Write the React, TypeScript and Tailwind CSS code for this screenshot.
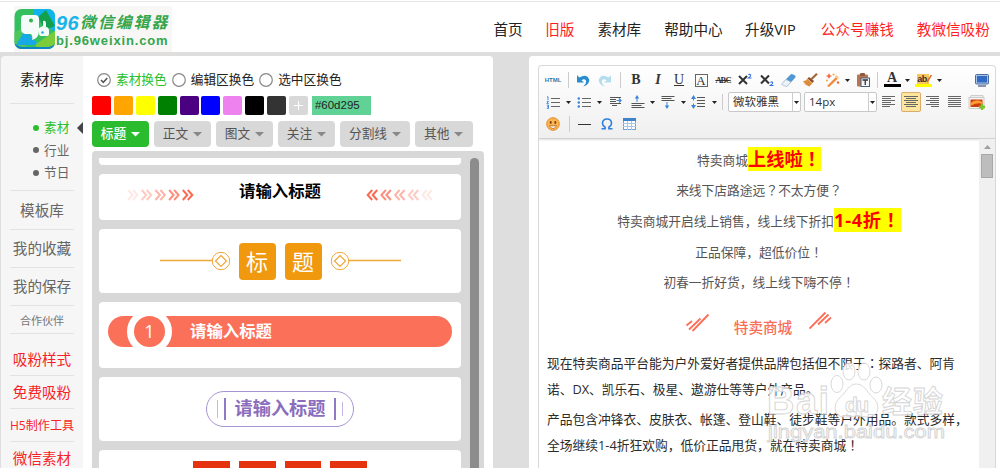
import React from 'react';
import clsx from 'clsx';

const NAV = [
  { label: '首页', pos: 'ml-[493.5px]' },
  { label: '旧版', pos: 'ml-[22.5px]', hot: true },
  { label: '素材库', pos: 'ml-[23px]' },
  { label: '帮助中心', pos: 'ml-[23px]' },
  { label: '升级VIP', pos: 'ml-[22.5px]' },
  { label: '公众号赚钱', pos: 'ml-[25px]', hot: true },
  { label: '教微信吸粉', pos: 'ml-[23px]', hot: true },
];

const SWATCHES = [
  'bg-[#ff0000]',
  'bg-[#ffa500]',
  'bg-[#ffff00]',
  'bg-[#008000]',
  'bg-[#4b0082]',
  'bg-[#0000ff]',
  'bg-[#ee82ee]',
  'bg-black',
  'bg-[#333333]',
];

const TABS = [
  { label: '标题', size: 'w-[57px]', active: true },
  { label: '正文', size: 'w-[57px]' },
  { label: '图文', size: 'w-[57px]' },
  { label: '关注', size: 'w-[57px]' },
  { label: '分割线', size: 'w-[70px]' },
  { label: '其他', size: 'w-[57.5px]' },
];

// Centres the full-width marks ！？： in their cell, the SC face sets them to the left
const Zh: React.FC<{ children: string }> = ({ children }) => (
  <>
    {children.split(/([！？：])/).map((part, i) =>
      /^[！？：]$/.test(part) ? (
        <span key={i} className="font-['Noto_Sans_CJK_JP',sans-serif]" lang="ja">{part}</span>
      ) : (
        part
      )
    )}
  </>
);

const Logo = () => (
  <div className="absolute left-[14px] top-[6px] flex h-[46px] w-[158px] bg-[#f8f7f5]">
    <svg width="42" height="46" viewBox="0 0 42 46" className="shrink-0">
      <defs>
        <clipPath id="logo-clip">
          <rect x="0.5" y="3" width="40.5" height="40" rx="7" />
        </clipPath>
      </defs>
      <g clipPath="url(#logo-clip)">
        <rect width="42" height="46" fill="#35c060" />
        <path d="M20 3h22v24L20 9z" fill="#0fb4ea" />
        <path d="M24 11l8-7 9 16-10 4z" fill="#12a04c" />
        <path d="M0 27l7-4 5 20H0z" fill="#4fc75a" />
        <path d="M2 39l9-15 14 15z" fill="#16a9e6" />
        <path d="M22 38l19-13v18H22z" fill="#7bcc3a" />
        <path d="M0 37q4 4 10 4h22q6 0 10-4v9H0z" fill="#0d84c6" />
      </g>
      <path d="M10 9h11q4 0 4 4v12q0 7-7 9 1-4-1-6h-6q-4-1-4-5V13q0-4 3-4z" fill="#f4fbf8" />
      <path d="M25 22l4-2v-5q3-1 3 3v3q3 0 3 4v3q0 2-3 2h-5q-2 0-2-3z" fill="#f4fbf8" />
      <circle cx="17" cy="14.500" r="2" fill="#2db34a" />
      <circle cx="28.500" cy="26.500" r="1.300" fill="#18aee4" />
    </svg>
    <div className="flex flex-col whitespace-nowrap">
      <div className="mt-[6px] flex h-[21px] items-center italic leading-none text-[#35a64b]">
        <span className="w-[24px] font-['Liberation_Sans',sans-serif] text-[20px] font-bold tracking-[0.5px] text-[#19b4e8]">96</span>
        <span className="text-[15.800px] font-bold tracking-[2.100px]">微信编辑器</span>
      </div>
      <div className="font-['Liberation_Sans',sans-serif] text-[13px] font-bold leading-[15px] tracking-[0.850px] text-[#35a64b]">
        bj.96weixin.com
      </div>
    </div>
  </div>
);

const SideItem: React.FC<{ className?: string; children: React.ReactNode }> = ({ className, children }) => (
  <div
    className={clsx(
      'flex shrink-0 items-center justify-center whitespace-nowrap border-b border-[#e2e2e2]',
      className
    )}
  >
    {children}
  </div>
);

const Sidebar = () => (
  <aside className="flex w-[82px] shrink-0 flex-col rounded-tl bg-[#f6f6f6] px-[9px] text-[14.6px] text-[#666]">
    <SideItem className="h-12 pt-px text-[#222]">素材库</SideItem>
    <div className="-mr-[9px] h-[87px] shrink-0 pt-[12.500px] text-[12.7px]">
      {['素材', '行业', '节日'].map((name, i) => (
        <div key={name} className={clsx('flex h-[22.600px] items-center pl-[23px]', i === 0 && 'text-[#2bbf2e]')}>
          <span className={clsx('mr-[5px] size-1.5 rounded-full', i === 0 ? 'bg-[#2bbf2e]' : 'bg-[#666]')} />
          {name}
          {i === 0 && (
            <svg width="6" height="12" className="ml-auto">
              <path d="M6 0v12L0 6z" fill="#45434a" />
            </svg>
          )}
        </div>
      ))}
    </div>
    <SideItem className="-mt-px h-10 border-t pt-[2px]">模板库</SideItem>
    <SideItem className="h-[38px] pt-px">我的收藏</SideItem>
    <SideItem className="h-[38px] pt-px">我的保存</SideItem>
    <SideItem className="h-7 pt-[3px] text-[11px] text-[#777]">合作伙伴</SideItem>
    <SideItem className="h-[42px] pt-[11px] text-[#f81f28]">吸粉样式</SideItem>
    <SideItem className="h-[33px] pt-[2px] text-[#f81f28]">免费吸粉</SideItem>
    <SideItem className="h-[33px] pt-[2px] text-[12.1px] text-[#f81f28]">H5制作工具</SideItem>
    <SideItem className="h-[33px] pt-[2px] text-[#f81f28]">微信素材</SideItem>
  </aside>
);

const Radio: React.FC<{ label: string; checked?: boolean }> = ({ label, checked }) => (
  <label className={clsx('flex items-center gap-[5px] whitespace-nowrap', checked ? 'text-[#2bbf2e]' : 'text-[#222]')}>
    <svg width="14" height="14" fill="none" stroke="#888" strokeWidth="1.200">
      <circle cx="7" cy="7" r="6.300" />
      {checked && <path d="M4 7l2.300 2.300L10.300 5" stroke="#555" strokeWidth="1.500" />}
    </svg>
    {label}
  </label>
);

const Chevrons: React.FC<{ flip?: boolean }> = ({ flip }) => (
  <svg width="68" height="12" fill="none" stroke="#fb6b54" strokeWidth="2" className={flip ? '-scale-x-100' : ''}>
    {[0.15, 0.35, 0.5, 0.75, 1].map((o, i) => (
      <g key={i} opacity={o} transform={`translate(${i * 13.7} 0)`}>
        <path d="M1 1l4.500 5L1 11" />
        <path d="M6 1l4.500 5L6 11" />
      </g>
    ))}
  </svg>
);

const Coin: React.FC<{ flip?: boolean }> = ({ flip }) => (
  <svg width="70" height="20" fill="none" stroke="#efa63c" className={flip ? '-scale-x-100' : ''}>
    <path d="M0 9.500h52" strokeWidth="1.500" />
    <circle cx="61" cy="10" r="8.700" />
    <path d="M61 4.500l5.500 5.500-5.500 5.500-5.500-5.500z" strokeWidth="1.200" />
  </svg>
);

const Card: React.FC<{ className: string; children?: React.ReactNode }> = ({ className, children }) => (
  <div className={clsx('flex shrink-0 justify-center bg-white', className)}>{children}</div>
);

const Materials = () => (
  <section className="flex w-[410px] shrink-0 flex-col rounded-tr bg-white pl-[9px] text-[12.7px]">
    <div className="mt-[15px] flex h-[18px] shrink-0 items-center gap-[5px] pl-[5px]">
      <Radio label="素材换色" checked />
      <Radio label="编辑区换色" />
      <Radio label="选中区换色" />
    </div>
    <div className="mt-[6.500px] flex h-[19.500px] shrink-0 gap-[2.900px]">
      {SWATCHES.map((c) => (
        <span key={c} className={clsx('w-[19px] rounded-[2px]', c)} />
      ))}
      <span className="flex w-[19px] items-center justify-center rounded-[2px] bg-[#d8d8d8] text-white">
        <svg width="9" height="9" stroke="currentColor">
          <path d="M0 4.500h9M4.500 0v9" />
        </svg>
      </span>
      <span className="ml-px flex w-[59px] items-center bg-[#60d295] pl-[3px] font-['Liberation_Sans',sans-serif] text-[11.500px] text-[#222]">
        #60d295
      </span>
    </div>
    <div className="mt-[6px] flex h-[26px] shrink-0 gap-[5px]">
      {TABS.map((t) => (
        <button
          key={t.label}
          className={clsx(
            'flex shrink-0 items-center justify-center gap-[5px] whitespace-nowrap rounded',
            t.size,
            t.active ? 'bg-[#2bbb2e] font-medium text-white' : 'bg-[#d8d8d8] text-[#555]'
          )}
        >
          {t.label}
          <svg width="9" height="5" className={t.active ? 'text-white' : 'text-[#888]'}>
            <path d="M0 0h9L4.500 4.500z" fill="currentColor" />
          </svg>
        </button>
      ))}
    </div>
    <div className="mt-1 flex min-h-0 w-[392px] flex-1 justify-between overflow-hidden rounded-t bg-[#d8d8d8] pl-[7px] pr-[5px] pt-[7px]">
      <div className="flex w-[362px] flex-col gap-[9px]">
        <Card className="h-[7px] rounded-b" />
        <Card className="h-[46px] justify-between! rounded px-7 pt-[15px]">
          <Chevrons />
          <span className="-mt-[10px] text-[16.400px] font-bold leading-6 text-black">请输入标题</span>
          <Chevrons flip />
        </Card>
        <Card className="h-[64px] items-center gap-[9px] rounded">
          <Coin />
          {['标', '题'].map((ch) => (
            <span key={ch} className="flex size-[37px] items-center justify-center rounded bg-[#f0990f] text-[22px] text-white">
              {ch}
            </span>
          ))}
          <Coin flip />
        </Card>
        <Card className="h-[66px] rounded px-[9px] pt-[14px]">
          <div className="flex h-[31px] flex-1 items-center overflow-hidden rounded-full bg-[#fb7059] pl-[19px] text-white">
            <span className="flex size-[45px] shrink-0 items-center justify-center rounded-full border-[7px] border-white text-[18px]">
              1
            </span>
            <span className="ml-[18px] text-[16.400px] font-bold">请输入标题</span>
          </div>
        </Card>
        <Card className="h-[64px] rounded pt-[13.500px]">
          <div className="flex h-[36.500px] w-[148px] items-center justify-center rounded-full border border-[#a894d2] text-[#8a6dbd]">
            <span className="mr-[5.500px] h-[18px] w-[1.500px] bg-[#c4b6df]" />
            <span className="h-[22px] w-[2px] bg-[#8f78c4]" />
            <span className="mx-[9px] whitespace-nowrap text-[18.200px] font-bold">请输入标题</span>
            <span className="h-[22px] w-[2px] bg-[#8f78c4]" />
            <span className="ml-[5.500px] h-[14px] w-[1.500px] bg-[#c4b6df]" />
          </div>
        </Card>
        <Card className="h-[40px] gap-[9px] rounded-t pt-[10.500px]">
          {[0, 1, 2, 3].map((n) => (
            <span key={n} className="h-9 w-[36.600px] bg-[#e5330f]" />
          ))}
        </Card>
      </div>
      <div className="w-[9px] rounded-t-full bg-[#8c8c8c]" />
    </div>
  </section>
);

const Cell: React.FC<{ className?: string; children?: React.ReactNode }> = ({ className, children }) => (
  <span className={clsx('flex h-[20px] shrink-0 items-center justify-center leading-none', className)}>{children}</span>
);

const Sep: React.FC<{ className: string }> = ({ className }) => (
  <Cell className={className}>
    <span className="h-4 w-px bg-[#ccc]" />
  </Cell>
);

const Caret: React.FC<{ className: string }> = ({ className }) => (
  <Cell className={className}>
    <svg width="5" height="3">
      <path d="M0 0h5L2.500 3z" fill="#222" />
    </svg>
  </Cell>
);

const Lines: React.FC<{ rows: string }> = ({ rows }) => (
  <svg width="14" height="12" stroke="#666" strokeWidth="1">
    <path d={rows} />
  </svg>
);

const Toolbar = () => (
  <div className="h-[73px] shrink-0 rounded-t border-b border-[#d2d2d2] bg-gradient-to-b from-white to-[#efefef] pl-[3px] pt-[3px] text-[#333] shadow-[0_1px_2px_#ddd]">
    <div className="flex h-[22px] items-center font-['Liberation_Serif',serif]">
      <Cell className="w-[22px] font-['Liberation_Sans',sans-serif] text-[6px] font-bold text-[#2c7bab]">HTML</Cell>
      <Sep className="w-2" />
      <Cell className="w-[22px]">
        <svg width="14" height="13" fill="none">
          <path d="M1 1v7.500h7L5.500 6.200q3-1.900 4.400.2 1.200 2.500-2.700 6.100 6.500-2 6-7Q11-.8 3.300 3.400z" fill="#288dcc" />
        </svg>
      </Cell>
      <Cell className="w-[22px]">
        <svg width="14" height="13" className="-scale-x-100">
          <path d="M1 1v7.500h7L5.500 6.200q3-1.900 4.400.2 1.200 2.500-2.700 6.100 6.500-2 6-7Q11-.8 3.300 3.400z" fill="#b4ddef" />
        </svg>
      </Cell>
      <Sep className="w-2" />
      <Cell className="w-6 text-[14px] font-bold">B</Cell>
      <Cell className="w-5 text-[14px] font-bold italic">I</Cell>
      <Cell className="w-[22px] text-[14px] font-medium underline">U</Cell>
      <Cell className="w-[22px]">
        <span className="flex size-[13px] items-center justify-center border border-[#666] text-[13px]">A</span>
      </Cell>
      <Cell className="w-[22px] text-[8.500px] font-bold tracking-[-0.900px] line-through">ABC</Cell>
      <Cell className="w-[22px]">
        <svg width="15" height="14" fill="none" stroke="#333" strokeWidth="2">
          <path d="M1 3l8 8M9 3l-8 8" />
          <path d="M10.500 2q1-1.500 2.200 0 .3 1-2.200 3h3" stroke="#2d6fe0" strokeWidth="1.200" />
        </svg>
      </Cell>
      <Cell className="w-[23px]">
        <svg width="15" height="14" fill="none" stroke="#333" strokeWidth="2">
          <path d="M1 2.500l8 8M9 2.500l-8 8" />
          <path d="M10.500 9.500q1-1.500 2.200 0 .3 1-2.200 3h3" stroke="#2d6fe0" strokeWidth="1.200" />
        </svg>
      </Cell>
      <Cell className="w-5">
        <svg width="16" height="14">
          <path d="M1 10.500L9.500 1.500q1-1 2.200-.2L14 2.500q1.300 1 .2 2.300L6.500 13q-1 .8-2 .2l-3-1.200q-1.200-.7-.5-1.500z" fill="#4f98d4" />
          <path d="M1 10.500l4-4 5 2.500-3.500 4q-1 .8-2 .2l-3-1.200q-1.200-.7-.5-1.500z" fill="#eef3f8" stroke="#9fb4c8" strokeWidth=".6" />
        </svg>
      </Cell>
      <Cell className="w-[22px]">
        <svg width="16" height="14">
          <path d="M15 .8L9.500 6" stroke="#a2653a" strokeWidth="2.200" />
          <path d="M7 4l5 4-1.500 2L5.500 5.500z" fill="#8a4b32" />
          <path d="M5.500 5.500l5 4.500-3 3.500Q3 12.500 1 8q3 0 4.500-2.500z" fill="#e79a45" />
          <path d="M3 8.500l4.500 4M5 7.500l4 4" stroke="#b9652a" strokeWidth=".7" />
        </svg>
      </Cell>
      <Cell className="w-[22px]">
        <svg width="15" height="14">
          <path d="M2 13L11 4l1.800 1.800L4 14z" fill="#f08a3a" />
          <path d="M10 3.500l2.500 2.500 1.500-1.500L11.500 2z" fill="#ffc58b" />
          <path d="M4 0l1 2.200L7.200 3 5 4l-1 2-1-2-2.200-1L3 2.200z" fill="#ef6a3c" />
          <circle cx="2" cy="7.500" r="1" fill="#f5a33c" />
          <circle cx="8.500" cy="1.500" r="1" fill="#f5a33c" />
          <circle cx="13" cy="9.500" r="1.200" fill="#ef6a3c" />
        </svg>
      </Cell>
      <Caret className="w-2" />
      <Cell className="w-6">
        <svg width="14" height="14">
          <rect x="1" y="1.500" width="11" height="12" rx="1" fill="#b9764e" />
          <rect x="4" y="0" width="5" height="3" rx="1" fill="#8a5a44" />
          <rect x="5" y="5" width="8.500" height="8.500" fill="#f3f7fc" stroke="#4a5f80" />
          <path d="M6.500 7h5.500M9.250 7v5" stroke="#333" strokeWidth="1.300" />
        </svg>
      </Cell>
      <Sep className="w-[5px]" />
      <Cell className="w-6">
        <span className="flex h-[14px] w-[17px] items-end justify-center border-b-[3px] border-black text-[14px] font-bold leading-[12px]">A</span>
      </Cell>
      <Caret className="w-[7px]" />
      <Cell className="w-6">
        <span className="relative flex h-[14px] w-[17px] items-end justify-center border-b-[3px] border-[#ffff00] font-['Liberation_Sans',sans-serif] text-[9px] font-bold tracking-[-0.500px] leading-[10px]">
          <span className="bg-[#f7c65c] pr-0.5">ab</span>
          <svg width="6" height="9" className="absolute right-0 top-[2px]">
            <path d="M5.500 0L1 7" stroke="#e0672b" strokeWidth="1.500" />
          </svg>
        </span>
      </Cell>
      <Caret className="w-2" />
      <Cell className="ml-auto mr-[2px] w-[22px]">
        <svg width="14" height="13">
          <rect x=".5" y=".5" width="13" height="9.500" rx="1" fill="#a8c4e8" stroke="#4c6a9a" />
          <rect x="2" y="2" width="10" height="6.500" fill="#2f6bc4" />
          <path d="M3 12h8" stroke="#5b7399" strokeWidth="1.500" />
        </svg>
      </Cell>
    </div>

    <div className="flex h-[22px] items-center">
      <Cell className="w-[22px]">
        <svg width="14" height="13" fill="none" stroke="#666">
          <path d="M5 2.500h9M5 6.500h9M5 10.500h9" />
          <path d="M1 .8h1v3.200M.8 5.300h1.700L.8 7.600h1.900M.8 9.200h1.700v3.200H.8M1 10.800h1.400" stroke="#3380dd" strokeWidth=".9" />
        </svg>
      </Cell>
      <Caret className="w-2" />
      <Cell className="w-[23px]">
        <svg width="14" height="13" stroke="#666">
          <path d="M5 2.500h9M5 6.500h9M5 10.500h9" />
          <g fill="#3380dd" stroke="none">
            <circle cx="1.800" cy="2.500" r="1.200" />
            <circle cx="1.800" cy="6.500" r="1.200" />
            <circle cx="1.800" cy="10.500" r="1.200" />
          </g>
        </svg>
      </Cell>
      <Caret className="w-2" />
      <Cell className="w-6">
        <svg width="13" height="12" stroke="#555">
          <path d="M1 1.500h11M1 3.500h6M1 5.500h6M1 7.500h11M3 9.500h5" />
          <path d="M7.500 4.500h4M10 2.500l2 2-2 2" stroke="#3d84d8" fill="none" strokeWidth="1.200" />
        </svg>
      </Cell>
      <Cell className="w-[21px]">
        <svg width="14" height="14" stroke="#555">
          <path d="M.5 8.500h13M.5 10.500h10M.5 12.500h13" />
          <path d="M6 7V2" stroke="#3d84d8" />
          <path d="M3.800 3.500L6 0l2.200 3.500z" fill="#3d84d8" stroke="none" />
        </svg>
      </Cell>
      <Caret className="w-2" />
      <Cell className="w-6">
        <svg width="14" height="14" stroke="#555">
          <path d="M.5 1.500h13M.5 3.500h10M.5 5.500h13" />
          <path d="M6 7v5" stroke="#3d84d8" />
          <path d="M3.800 10.500L6 14l2.200-3.500z" fill="#3d84d8" stroke="none" />
        </svg>
      </Cell>
      <Caret className="w-1.5" />
      <Cell className="w-6">
        <svg width="14" height="14" stroke="#555">
          <path d="M6 2.500h8M6 5.500h8M6 8.500h8M6 11.500h8" />
          <path d="M2.500 2v3.500M2.500 8.500V12" stroke="#3d84d8" />
          <path d="M0 4L2.500 0 5 4zM0 10l2.500 4L5 10z" fill="#3d84d8" stroke="none" />
        </svg>
      </Cell>
      <Caret className="w-2" />
      <Sep className="w-[9px]" />
      <span className="ml-px flex h-5 w-[73px] items-center justify-between rounded-[2px] border border-[#c8c8c8] bg-white pl-1 text-[11.500px]">
        <span className="whitespace-nowrap">微软雅黑</span>
        <Caret className="h-[18px]! w-2 border-l border-[#ccc]" />
      </span>
      <span className="ml-[3px] flex h-5 w-[73px] items-center justify-between rounded-[2px] border border-[#c8c8c8] bg-white pl-1 text-[11.500px]">
        <span>14px</span>
        <Caret className="h-[18px]! w-2 border-l border-[#ccc]" />
      </span>
      <Cell className="ml-px w-[22px]">
        <Lines rows="M0 .5h13M0 2.500h9M0 4.500h13M0 6.500h9M0 8.500h13M0 10.500h8" />
      </Cell>
      <Cell className="w-[22px]">
        <span className="flex size-5 items-center justify-center rounded-[2px] border border-[#dcac6c] bg-[#ffe69f]">
          <Lines rows="M0 .5h14M2 2.500h10M0 4.500h14M2 6.500h10M0 8.500h14M2 10.500h10" />
        </span>
      </Cell>
      <Cell className="w-[22px]">
        <Lines rows="M0 .5h13M4 2.500h9M0 4.500h13M4 6.500h9M0 8.500h13M5 10.500h8" />
      </Cell>
      <Cell className="w-[22px]">
        <Lines rows="M0 .5h13M0 2.500h13M0 4.500h13M0 6.500h13M0 8.500h13M0 10.500h13" />
      </Cell>
      <Cell className="w-[22px]">
        <svg width="18" height="15">
          <path d="M3 .5h12v3H2z" fill="#eee" stroke="#bbb" strokeWidth=".7" />
          <rect x="1" y="2.500" width="15" height="11" fill="#f6f6f6" stroke="#bbb" strokeWidth=".7" />
          <rect x="2.500" y="4.500" width="12" height="7.500" fill="#c9400c" />
          <path d="M2.500 8q6-5 12-1v2q-6-2-12 2z" fill="#ff9a35" />
          <path d="M14 9v6M11 12h6" stroke="#7ac52b" strokeWidth="2.400" />
        </svg>
      </Cell>
    </div>

    <div className="flex h-[22px] items-center">
      <Cell className="w-[22px]">
        <svg width="14" height="14">
          <circle cx="7" cy="7" r="6.300" fill="#fcb550" stroke="#e58a25" />
          <ellipse cx="4.700" cy="5.500" rx="1" ry="1.400" fill="#7a4513" />
          <ellipse cx="9.300" cy="5.500" rx="1" ry="1.400" fill="#7a4513" />
          <path d="M3.500 8.500q3.500 1 7 0-1 3-3.500 3t-3.500-3z" fill="#fff" stroke="#a35a18" strokeWidth=".7" />
        </svg>
      </Cell>
      <Sep className="w-2.5" />
      <Cell className="w-[21px]">
        <span className="h-px w-[13px] bg-[#333]" />
      </Cell>
      <Cell className="w-[23px]">
        <svg width="12" height="12" fill="none" stroke="#2f7fdd" strokeWidth="1.600">
          <path d="M.5 10.700h3.600V9.200Q1.200 7.500 1.500 4.800 2 1.200 6 1t4.500 3.800q.3 2.700-2.600 4.400v1.500h3.600" />
        </svg>
      </Cell>
      <Cell className="w-[22px]">
        <svg width="13" height="12" fill="none">
          <rect x=".5" y=".5" width="12" height="11" fill="#fff" stroke="#6fa3d8" />
          <path d="M0 0h13v3H0z" fill="#3e83c8" />
          <path d="M4.500 3v9M8.500 3v9M0 5.500h13M0 8.500h13" stroke="#a9c8e8" />
        </svg>
      </Cell>
    </div>
  </div>
);

const Mark: React.FC<{ className?: string; children: string }> = ({ className, children }) => (
  <span
    className={clsx(
      'inline-block bg-[#ffff00] align-[-1.500px] text-[18.200px] font-bold leading-[23px] text-[#ff0000]',
      className
    )}
  >
    <Zh>{children}</Zh>
  </span>
);

const Article = () => (
  <div className="flex-1 overflow-hidden whitespace-nowrap pt-[5.500px] text-[12.750px] text-[#555]">
    <div className="text-center leading-[30.700px]">
      <p className="h-[30.700px]">特卖商城<Mark>上线啦！</Mark></p>
      <p className="h-[30.700px]"><Zh>来线下店路途远？不太方便？</Zh></p>
      <p className="h-[30.700px]">特卖商城开启线上销售，线上线下折扣<Mark className="tracking-[0.700px]">1-4折！</Mark></p>
      <p className="h-[30.700px]"><Zh>正品保障，超低价位！</Zh></p>
      <p className="h-[30.700px]"><Zh>初春一折好货，线上线下嗨不停！</Zh></p>
    </div>
    <div className="mt-[11px] flex h-[36px] justify-center text-[#fb6e57]">
      <svg width="26" height="22" fill="none" stroke="currentColor" strokeWidth="1.800" className="mt-[4px]">
        <path d="M1.500 12.500L7 8M4 16.500L15.500 5.500M7.500 18L23.500 1.500" />
      </svg>
      <span className="ml-[23px] mr-[17px] text-[14.600px] font-medium leading-[36px]">特卖商城</span>
      <svg width="24" height="22" fill="none" stroke="currentColor" strokeWidth="1.800" className="mt-[2px]">
        <path d="M.5 17.500L16.500 1.500M9 13.500L19.500 3.500M16 12L22 6.500" />
      </svg>
    </div>
    <div className="mt-[5.500px] pl-2 leading-[25.500px] text-[#2b2b2b]">
      <p>
        <Zh>现在特卖商品平台能为户外爱好者提供品牌包括但不限于：探路者、阿肯</Zh>
        <br />
        诺、DX、凯乐石、极星、遨游仕等等户外产品。
      </p>
      <p className="mt-[4.500px]">
        产品包含冲锋衣、皮肤衣、帐篷、登山鞋、徒步鞋等户外用品。款式多样，
        <br />
        <Zh>全场继续1-4折狂欢购，低价正品甩货，就在特卖商城！</Zh>
      </p>
    </div>
  </div>
);

const Watermark = () => (
  <svg
    width="184"
    height="84"
    className="absolute left-[766px] top-[362px]"
    fill="#fff"
    fillOpacity=".8"
    stroke="#d4d4d4"
    strokeWidth=".9"
    fontFamily="'Liberation Sans', sans-serif"
    fontWeight="bold"
  >
    <text x="1" y="52" fontSize="38" textLength="62">Bai</text>
    <ellipse cx="71" cy="22" rx="6" ry="8.500" />
    <ellipse cx="83" cy="9.500" rx="6" ry="8.500" />
    <ellipse cx="98" cy="9.500" rx="6" ry="8.500" />
    <ellipse cx="110" cy="23" rx="6" ry="8" />
    <path d="M90.500 22c8 0 10 8 16 13 9 8 6 20-4 20-5 0-8-1-12-1s-7 1-12 1c-10 0-13-12-4-20 6-5 8-13 16-13z" />
    <text x="79" y="50" fontSize="21" textLength="24">du</text>
    <text x="116" y="50" fontSize="30" textLength="61" fontFamily="'Noto Sans CJK SC', sans-serif">经验</text>
    <text x="2" y="76" fontSize="19" textLength="177" lengthAdjust="spacingAndGlyphs" fontWeight="normal">jingyan.baidu.com</text>
  </svg>
);

export default function App() {
  return (
    <div className="relative flex h-[468px] w-[1000px] flex-col overflow-hidden bg-white font-['Open_Sans','Noto_Sans_CJK_SC',sans-serif]">
      <header className="relative h-[52px] shrink-0 pt-px">
        <div className="h-px bg-[#e6e6e6]" />
        <Logo />
        <nav className="flex h-[56px] items-center whitespace-nowrap text-[14.600px]">
          {NAV.map((n) => (
            <a key={n.label} href="#" className={clsx('shrink-0', n.pos, n.hot ? 'text-[#ff1f1f]' : 'text-[#222]')}>
              {n.label}
            </a>
          ))}
        </nav>
      </header>

      <main className="flex min-h-0 flex-1 bg-[#dedede] pl-px pt-1">
        <Sidebar />
        <Materials />
        <section className="ml-9 flex flex-1 rounded-tl bg-white pl-[9px] pr-[4px] pt-[9px]">
          <div className="flex min-w-0 flex-1 flex-col rounded-t border border-b-0 border-[#d8d8d8]">
            <Toolbar />
            <div className="flex min-h-0 flex-1">
              <Article />
              <div className="flex w-4 flex-col items-center bg-[#f0f0f0] pt-[6px]">
                <svg width="7" height="4">
                  <path d="M0 4h7L3.500 0z" fill="#a0a0a0" />
                </svg>
                <div className="mt-[5px] h-6 w-3 border border-[#a8a8a8] bg-[#bdbdbd]" />
              </div>
            </div>
          </div>
        </section>
      </main>

      <Watermark />
    </div>
  );
}
